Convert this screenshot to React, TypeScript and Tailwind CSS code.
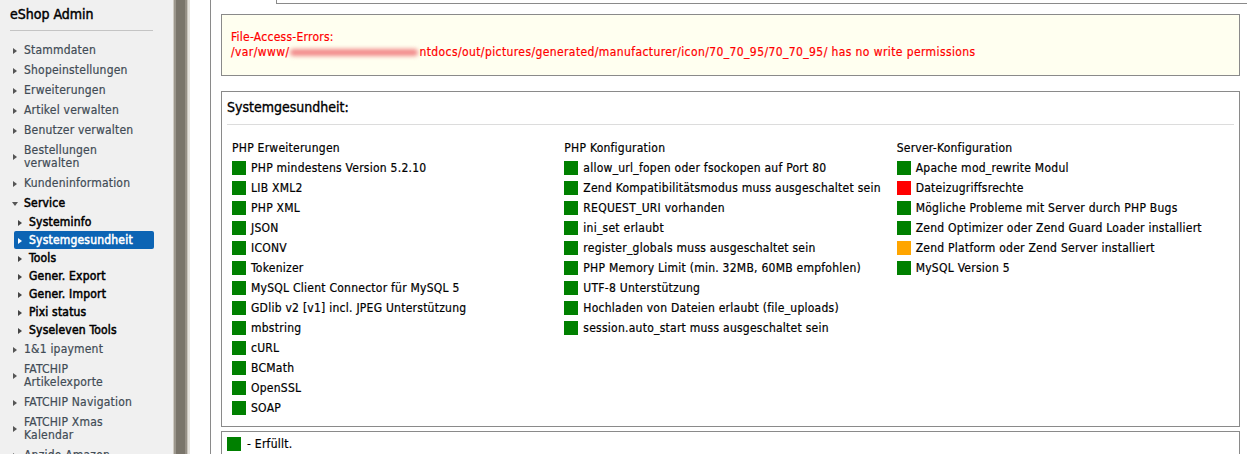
import React from 'react';

type Status = 'ok' | 'warn' | 'fail';

interface Check {
    label: string;
    status: Status;
}

const font = { fontFamily: '"DejaVu Sans Condensed", "DejaVu Sans", sans-serif' };

const menu = [
    'Stammdaten',
    'Shopeinstellungen',
    'Erweiterungen',
    'Artikel verwalten',
    'Benutzer verwalten',
    'Bestellungen verwalten',
    'Kundeninformation',
];

const serviceItems = [
    'Systeminfo',
    'Systemgesundheit',
    'Tools',
    'Gener. Export',
    'Gener. Import',
    'Pixi status',
    'Syseleven Tools',
];

const moduleItems = ['1&1 ipayment', 'FATCHIP Artikelexporte', 'FATCHIP Navigation', 'FATCHIP Xmas Kalendar', 'Anzido Amazon'];

const columns: { title: string; checks: Check[] }[] = [
    {
        title: 'PHP Erweiterungen',
        checks: [
            { label: 'PHP mindestens Version 5.2.10', status: 'ok' },
            { label: 'LIB XML2', status: 'ok' },
            { label: 'PHP XML', status: 'ok' },
            { label: 'JSON', status: 'ok' },
            { label: 'ICONV', status: 'ok' },
            { label: 'Tokenizer', status: 'ok' },
            { label: 'MySQL Client Connector für MySQL 5', status: 'ok' },
            { label: 'GDlib v2 [v1] incl. JPEG Unterstützung', status: 'ok' },
            { label: 'mbstring', status: 'ok' },
            { label: 'cURL', status: 'ok' },
            { label: 'BCMath', status: 'ok' },
            { label: 'OpenSSL', status: 'ok' },
            { label: 'SOAP', status: 'ok' },
        ],
    },
    {
        title: 'PHP Konfiguration',
        checks: [
            { label: 'allow_url_fopen oder fsockopen auf Port 80', status: 'ok' },
            { label: 'Zend Kompatibilitätsmodus muss ausgeschaltet sein', status: 'ok' },
            { label: 'REQUEST_URI vorhanden', status: 'ok' },
            { label: 'ini_set erlaubt', status: 'ok' },
            { label: 'register_globals muss ausgeschaltet sein', status: 'ok' },
            { label: 'PHP Memory Limit (min. 32MB, 60MB empfohlen)', status: 'ok' },
            { label: 'UTF-8 Unterstützung', status: 'ok' },
            { label: 'Hochladen von Dateien erlaubt (file_uploads)', status: 'ok' },
            { label: 'session.auto_start muss ausgeschaltet sein', status: 'ok' },
        ],
    },
    {
        title: 'Server-Konfiguration',
        checks: [
            { label: 'Apache mod_rewrite Modul', status: 'ok' },
            { label: 'Dateizugriffsrechte', status: 'fail' },
            { label: 'Mögliche Probleme mit Server durch PHP Bugs', status: 'ok' },
            { label: 'Zend Optimizer oder Zend Guard Loader installiert', status: 'ok' },
            { label: 'Zend Platform oder Zend Server installiert', status: 'warn' },
            { label: 'MySQL Version 5', status: 'ok' },
        ],
    },
];

const statusColor: Record<Status, string> = {
    ok: 'bg-[#008000]',
    warn: 'bg-[#ffa500]',
    fail: 'bg-[#ff0000]',
};

function ArrowRight({ color = 'border-l-[#555]' }: { color?: string }) {
    return <span className={`inline-block h-0 w-0 border-y-[3.5px] border-l-[4px] border-y-transparent ${color}`} />;
}

function MenuItem({ label }: { label: string }) {
    return (
        <li className="flex items-center pt-[4px] pb-[3px] leading-[13px] text-[#414b55]">
            <span className="flex w-[14px] shrink-0 pl-[3px]">
                <ArrowRight />
            </span>
            <span className="w-[116px]">{label}</span>
        </li>
    );
}

function Sidebar() {
    return (
        <aside className="w-[173px] shrink-0 bg-[#f0f0f0] pr-[20px] pl-[10px] text-[12px] tracking-[0.2px]">
            <div className="h-[30px] text-[14px] leading-[28px] tracking-normal text-black [-webkit-text-stroke-width:0.45px]">
                eShop Admin
            </div>
            <div className="h-px bg-[#c4c4c4]" />
            <ul className="mt-[9px]">
                {menu.map((item) => (
                    <MenuItem key={item} label={item} />
                ))}
                <li className="flex items-center pt-[4px] pb-[3px] leading-[13px] text-black [-webkit-text-stroke-width:0.5px]">
                    <span className="flex w-[14px] shrink-0 pl-[2px]">
                        <span className="inline-block h-0 w-0 border-x-[3.5px] border-t-[4px] border-x-transparent border-t-[#555]" />
                    </span>
                    Service
                </li>
                <li>
                    <ul className="-mr-[1px] ml-[4px]">
                        {serviceItems.map((item) => {
                            const active = item === 'Systemgesundheit';
                            return (
                                <li
                                    key={item}
                                    className={`flex items-center rounded-[2px] pt-[3px] pb-[2px] leading-[13px] [-webkit-text-stroke-width:0.5px] ${
                                        active ? 'bg-[#0c64b4] text-white' : 'text-black'
                                    }`}
                                >
                                    <span className="flex w-[15px] shrink-0 pl-[4px]">
                                        <ArrowRight color={active ? 'border-l-white' : 'border-l-[#444]'} />
                                    </span>
                                    {item}
                                </li>
                            );
                        })}
                    </ul>
                </li>
                {moduleItems.map((item) => (
                    <MenuItem key={item} label={item} />
                ))}
            </ul>
        </aside>
    );
}

function Divider() {
    return (
        <div className="flex w-[17px] shrink-0">
            <div className="w-[1px] bg-[#cfcbc3]" />
            <div className="w-[2px] bg-[#9b968c]" />
            <div className="w-[9px] bg-[#7a756b]" />
            <div className="w-[2px] bg-[#958f85]" />
            <div className="w-[1px] bg-[#c9c5bd]" />
            <div className="w-[2px] bg-[#e6e3de]" />
        </div>
    );
}

function Square({ status }: { status: Status }) {
    return <span className={`inline-block h-[14px] w-[14px] shrink-0 ${statusColor[status]}`} />;
}

export default function App() {
    return (
        <div
            className="flex h-[454px] w-[1247px] overflow-hidden bg-white text-[12px] text-black [-webkit-text-stroke-width:0.2px]"
            style={font}
        >
            <Sidebar />
            <Divider />
            <div className="w-[20px] shrink-0" />
            <main className="min-w-0 flex-1 border-l border-[#8a8a8a] pr-[7px] pl-[10px] tracking-[0.25px]">
                <div className="-mr-[7px] ml-[55px] h-[4px] border-b border-l border-[#8a8a8a]" />

                <div className="mt-[10px] border border-[#8a8a8a] bg-[#fffff0] px-[9px] py-[15px] leading-[15px] text-[#ff0000]">
                    <div>File-Access-Errors:</div>
                    <div className="flex items-center whitespace-nowrap tracking-[0.4px]">
                        /var/www/
                        <span className="mx-[1px] inline-block h-[7px] w-[128px] rounded-full bg-[#f28a8a] blur-[2px]" />
                        ntdocs/out/pictures/generated/manufacturer/icon/70_70_95/70_70_95/ has no write permissions
                    </div>
                </div>

                <div className="mt-[15px] border border-[#8a8a8a] px-[5px] pt-[5px] pb-[8px]">
                    <h2 className="text-[14px] leading-[20px] font-normal tracking-normal [-webkit-text-stroke-width:0.35px]">
                        Systemgesundheit:
                    </h2>
                    <div className="mt-[7px] h-px bg-[#dcdcdc]" />
                    <div className="mt-[13px] grid grid-cols-3 px-[5px]">
                        {columns.map((col) => (
                            <div key={col.title}>
                                <div className="leading-[20px]">{col.title}</div>
                                {col.checks.map((check) => (
                                    <div key={check.label} className="flex h-[20px] items-center gap-[5px] whitespace-nowrap">
                                        <Square status={check.status} />
                                        {check.label}
                                    </div>
                                ))}
                            </div>
                        ))}
                    </div>
                </div>

                <div className="mt-[4px] flex h-[40px] items-start gap-[6px] border border-[#8a8a8a] px-[5px] pt-[5px]">
                    <Square status="ok" />
                    <span className="leading-[14px]">- Erfüllt.</span>
                </div>
            </main>
        </div>
    );
}
